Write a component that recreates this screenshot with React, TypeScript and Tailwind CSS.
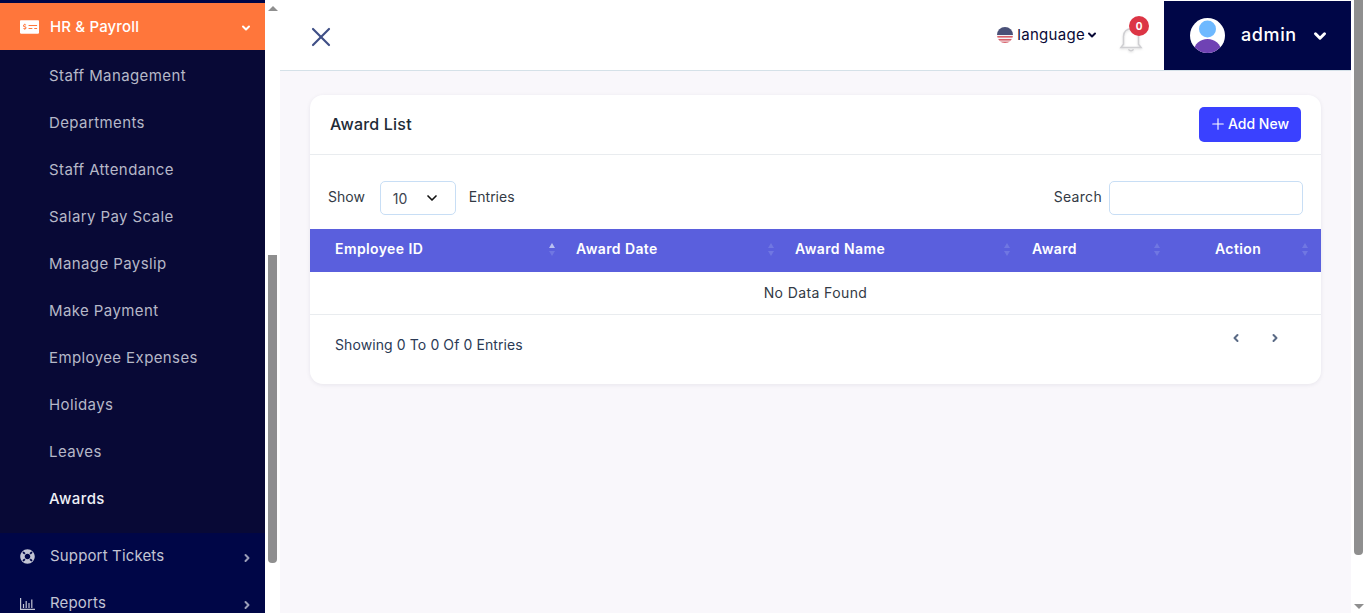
import { ChevronDown, ChevronLeft, ChevronRight, Plus, X } from 'lucide-react';
import { FaLifeRing, FaMoneyCheckAlt } from 'react-icons/fa';

const SUB_ITEMS = [
  'Staff Management', 'Departments', 'Staff Attendance', 'Salary Pay Scale', 'Manage Payslip',
  'Make Payment', 'Employee Expenses', 'Holidays', 'Leaves', 'Awards',
];

const COLUMNS = [
  { label: 'Employee ID', width: 'w-[241px]', pad: 'pl-[25px]', arrow: 'right-[-4px]', up: true },
  { label: 'Award Date', width: 'w-[219px]', pad: 'pl-[25px]', arrow: 'right-[-4px]' },
  { label: 'Award Name', width: 'w-[237px]', pad: 'pl-[25px]', arrow: 'right-[-3px]' },
  { label: 'Award', width: 'w-[150px]', pad: 'pl-[25px]', arrow: 'right-[-3px]' },
  { label: 'Action', width: 'w-[164px]', pad: 'pl-[58px]', arrow: 'right-[13px]' },
];

function SortArrows({ up, className }: { up?: boolean; className: string }) {
  return (
    <span className={`absolute top-[14px] flex flex-col gap-[3px] ${className}`}>
      <span className={`h-0 w-0 border-x-[3px] border-b-[5px] border-x-transparent ${up ? 'border-b-[#b9c0f2]' : 'border-b-[#7077e2]'}`} />
      <span className="h-0 w-0 border-x-[3px] border-t-[5px] border-x-transparent border-t-[#7077e2]" />
    </span>
  );
}

function Sidebar() {
  return (
    <aside className="flex h-[613px] w-[265px] shrink-0 flex-col overflow-hidden bg-[#000647] pt-[3px] tracking-[0.15px]">
      <div className="flex h-[47px] shrink-0 items-center bg-[#ff763b] pl-[20px] pr-[13px] text-white">
        <FaMoneyCheckAlt className="h-[18px] w-[19px]" />
        <span className="ml-[11px] mt-[2px] flex-1 text-[15px] font-medium">HR &amp; Payroll</span>
        <ChevronDown className="mt-[2px] h-3 w-3" strokeWidth={4} />
      </div>
      <div className="h-[483px] shrink-0 bg-[#080936] pt-[3px] tracking-[0.4px]">
        {SUB_ITEMS.map((item) => (
          <div
            key={item}
            className={`flex h-[47px] items-center pl-[49px] text-[15px] ${item === 'Awards' ? 'font-medium text-[#eef0f6]' : 'text-[#b6b8c8]'}`}
          >
            {item}
          </div>
        ))}
      </div>
      <div className="flex h-[47px] shrink-0 items-center pl-[20px] pr-[12px] text-[#c2c4d4]">
        <FaLifeRing className="h-[15px] w-[15px]" />
        <span className="ml-[15px] flex-1 text-[15px]">Support Tickets</span>
        <ChevronRight className="mt-[3px] h-3 w-3 text-[#9a9db8]" strokeWidth={4} />
      </div>
      <div className="flex h-[47px] shrink-0 items-center pl-[20px] pr-[12px] text-[#c2c4d4]">
        <svg viewBox="0 0 15 12" className="h-[12px] w-[15px]" fill="none" stroke="currentColor" strokeWidth="1.2">
          <path d="M0.6 0V11.4H15" />
          <path d="M3.5 10V6M6.2 10V3M9 10V5M11.8 10V1.5" />
        </svg>
        <span className="ml-[15px] flex-1 text-[15px]">Reports</span>
        <ChevronRight className="mt-[3px] h-3 w-3 text-[#9a9db8]" strokeWidth={4} />
      </div>
    </aside>
  );
}

function SidebarScrollbar() {
  return (
    <div className="relative h-[613px] w-[15px] shrink-0 bg-white">
      <span className="absolute left-[3px] top-[6px] h-0 w-0 border-x-[5px] border-b-[5px] border-x-transparent border-b-[#8f8f8f]" />
      <span className="absolute left-[3px] top-[255px] h-[308px] w-[9px] rounded-b-[4px] bg-[#8f8f8f]" />
    </div>
  );
}

function Header() {
  return (
    <header className="flex h-[71px] items-start justify-between border-b border-[#d5e1e8] bg-white pl-[25px]">
      <X className="mt-[21px] h-[32px] w-[32px] text-[#3f4f86]" strokeWidth={1.6} />
      <div className="flex h-[70px] items-center">
        <svg viewBox="0 0 16 16" className="h-4 w-4 rounded-full">
          <rect width="16" height="16" fill="#f4f4f6" />
          <rect y="9" width="16" height="1.6" fill="#d9606a" />
          <rect y="12" width="16" height="1.6" fill="#d9606a" />
          <rect y="14.6" width="16" height="1.4" fill="#d9606a" />
          <rect width="16" height="8" fill="#4a5178" />
        </svg>
        <span className="ml-[4px] text-[15px] leading-[70px] tracking-[0.3px] text-[#080936]">language</span>
        <ChevronDown className="ml-[1px] h-[12px] w-[12px] text-[#080936]" strokeWidth={4} />
        <div className="relative ml-[21px] mr-[20px] h-[70px] w-[25px]">
          <svg viewBox="0 0 24 24" className="absolute left-[-3px] top-[23px] h-[30px] w-[30px] text-[#cfcfd2] drop-shadow-[0_1px_1px_rgba(0,0,0,0.12)]" fill="none" stroke="currentColor" strokeWidth="1.2">
            <path d="M6 17V10.5a6 6 0 0 1 12 0V17l2 2.5H4Z" />
            <path d="M10 21a2.2 2.2 0 0 0 4 0" />
          </svg>
          <span className="absolute left-[10px] top-[16px] flex h-5 w-5 items-center justify-center rounded-full bg-[#dc3545] text-[10px] font-bold text-white">0</span>
        </div>
        <div className="mt-[1px] flex h-[69px] w-[187px] items-center self-start bg-[#000647] pl-[26px] text-white">
          <svg viewBox="0 0 35 35" className="h-[35px] w-[35px] rounded-full">
            <rect width="35" height="35" fill="#ffffff" />
            <circle cx="17.5" cy="11" r="8.5" fill="#6eb9ff" />
            <ellipse cx="17.5" cy="33" rx="13.5" ry="12" fill="#6f42b4" />
          </svg>
          <span className="ml-[16px] mt-[-2px] text-[18px] font-medium tracking-[0.6px]">admin</span>
          <ChevronDown className="ml-[14px] h-[18px] w-[18px]" strokeWidth={4} />
        </div>
      </div>
    </header>
  );
}

function AwardCard() {
  return (
    <section className="rounded-[13px] bg-white text-[14px] text-[#333a45] shadow-[0_1px_4px_rgba(30,30,60,0.08)]">
      <div className="flex h-[60px] items-center justify-between border-b border-[#e9ecef] px-[20px]">
        <h2 className="mt-[-2px] text-[16px] font-medium tracking-[0.2px] text-[#212b36]">Award List</h2>
        <button className="mt-[-1px] flex h-[35px] w-[102px] items-center justify-center gap-[1px] rounded-[5px] bg-[#3a41ff] pb-[1px] pr-[2px] text-[14px] font-medium text-white">
          <Plus className="h-[18px] w-[18px]" strokeWidth={1.5} />
          Add New
        </button>
      </div>
      <div className="flex h-[74px] items-start justify-between px-[18px] pt-[26px]">
        <div className="flex h-[34px] items-center">
          <span className="mt-[-3px]">Show</span>
          <div className="ml-[15px] flex h-[34px] w-[76px] items-center justify-between rounded-[5px] border border-[#c8def5] pl-[12px] pr-[15px] text-[#3d4450]">
            <span>10</span>
            <ChevronDown className="h-[16px] w-[16px] text-[#111]" strokeWidth={2.5} />
          </div>
          <span className="ml-[13px] mt-[-3px]">Entries</span>
        </div>
        <div className="flex h-[34px] items-center">
          <label className="mt-[-3px] tracking-[0.3px]">Search</label>
          <input className="ml-[7px] h-[34px] w-[194px] rounded-[5px] border border-[#c8def5] bg-white" />
        </div>
      </div>
      <div className="flex h-[43px] items-center bg-[#5a5fdd] font-semibold tracking-[0.4px] text-white">
        {COLUMNS.map((col) => (
          <div key={col.label} className={`relative flex h-full items-center pb-[5px] ${col.width} ${col.pad}`}>
            {col.label}
            <SortArrows up={col.up} className={col.arrow} />
          </div>
        ))}
      </div>
      <div className="flex h-[43px] items-center justify-center border-b border-[#e9ecef] pb-[2px] tracking-[0.4px]">No Data Found</div>
      <div className="flex h-[69px] items-start justify-between pl-[25px] pr-[40px]">
        <span className="mt-[19px] tracking-[0.1px] text-[#2b3a55]">Showing 0 To 0 Of 0 Entries</span>
        <div className="mt-[17px] flex gap-[27px] text-[#5a6a85]">
          <ChevronLeft className="h-3 w-3" strokeWidth={4} />
          <ChevronRight className="h-3 w-3" strokeWidth={4} />
        </div>
      </div>
    </section>
  );
}

export default function App() {
  return (
    <div className="flex h-[613px] w-[1366px] overflow-hidden bg-white font-['Inter','Liberation_Sans',sans-serif]">
      <Sidebar />
      <SidebarScrollbar />
      <main className="h-[613px] w-[1071px] shrink-0 bg-[#f9f7fb]">
        <Header />
        <div className="px-[30px] pt-[24px]">
          <AwardCard />
        </div>
      </main>
      <div className="relative h-[613px] flex-1 bg-white">
        <span className="absolute left-[3px] top-0 h-[555px] w-[9px] rounded-b-[4px] bg-[#8f8f8f]" />
        <span className="absolute bottom-[4px] left-[3px] h-0 w-0 border-x-[5px] border-t-[5px] border-x-transparent border-t-[#8f8f8f]" />
      </div>
    </div>
  );
}
